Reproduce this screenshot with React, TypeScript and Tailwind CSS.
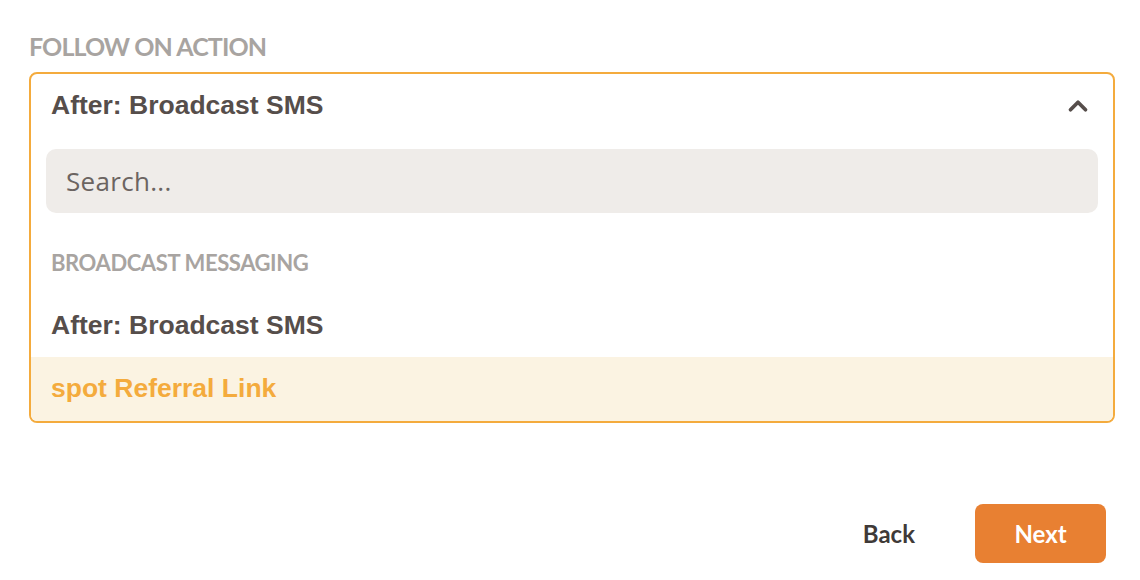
import { ChevronUp } from "lucide-react";

const items = [
  { label: "After: Broadcast SMS", active: false },
  { label: "spot Referral Link", active: true },
];

export default function App() {
  return (
    <div className="w-[1140px] h-[580px] bg-white px-[29px] pt-[31px] relative">
      <div className="text-[25px] leading-[30px] font-bold text-[#a8a4a1] tracking-[-0.9px] font-['Lato',sans-serif]">
        FOLLOW ON ACTION
      </div>

      {/* dropdown */}
      <div className="mt-[11px] w-[1086px] border-2 border-[#f4ab3d] rounded-[8px] overflow-hidden">
        <div className="flex items-center justify-between h-[63px] pl-[20px] pr-[20px] pt-[1px]">
          <span className="text-[26.5px] font-bold text-[#564e4b] font-['Liberation_Sans',Arial,sans-serif]">
            After: Broadcast SMS
          </span>
          <ChevronUp className="w-[30px] h-[30px] text-[#564e4b]" strokeWidth={3} />
        </div>

        <div className="px-[15px] pt-[12px]">
          <div className="h-[64px] rounded-[10px] bg-[#efece9] flex items-center px-[20px]">
            <span className="text-[26px] text-[#6b6461] tracking-[0.3px] font-['Open_Sans',sans-serif]">Search...</span>
          </div>
        </div>

        <div className="pl-[20px] pt-[38px] pb-[19px] text-[22px] leading-[24px] font-bold text-[#a8a4a1] tracking-[-0.4px] font-['Lato',sans-serif]">
          BROADCAST MESSAGING
        </div>

        {items.map((item) => (
          <div
            key={item.label}
            className={
              item.active
                ? "h-[64px] flex items-center pl-[20px] bg-[#fbf3e2] text-[#f4ab3d] text-[26.5px] font-bold font-['Liberation_Sans',Arial,sans-serif]"
                : "h-[63px] flex items-center pl-[20px] text-[#564e4b] text-[26.5px] font-bold font-['Liberation_Sans',Arial,sans-serif]"
            }
          >
            {item.label}
          </div>
        ))}
      </div>

      <div className="flex justify-end items-center mt-[81px] w-[1077px] gap-[30px]">
        <button className="text-[24px] font-bold text-[#3f3a38] px-[30px] font-['Lato',sans-serif]">Back</button>
        <button className="w-[131px] h-[59px] rounded-[8px] bg-[#e88032] text-white text-[24px] font-bold font-['Lato',sans-serif]">
          Next
        </button>
      </div>
    </div>
  );
}
